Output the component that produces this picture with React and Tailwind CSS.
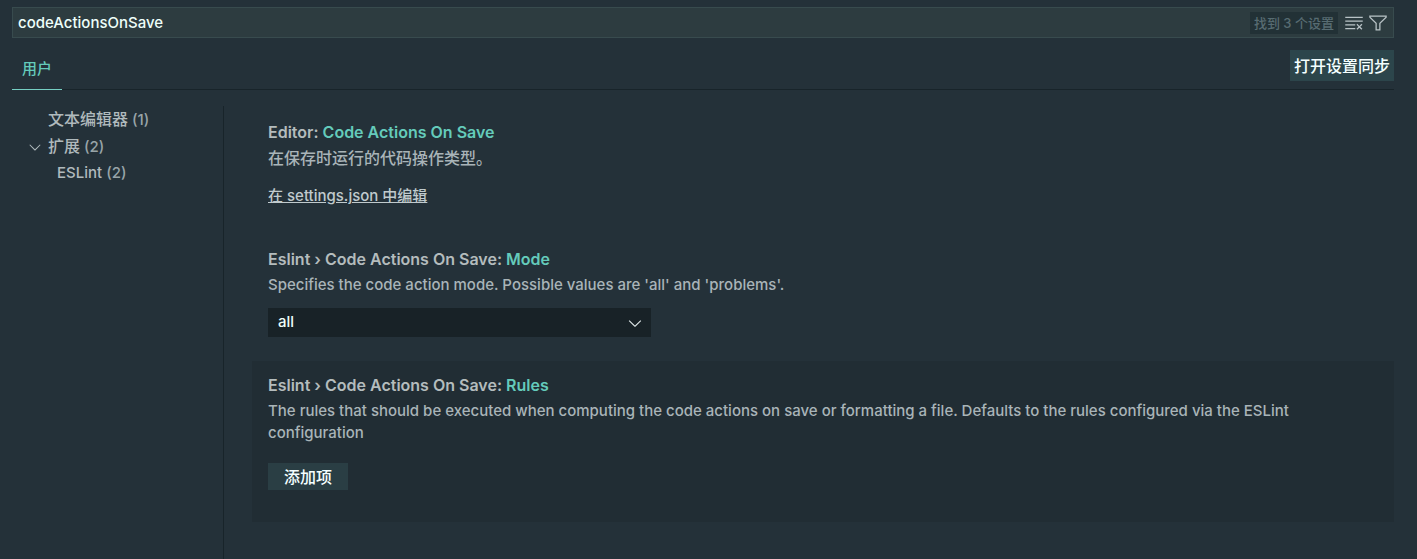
import { VscClearAll, VscFilter, VscChevronDown } from "react-icons/vsc";

function SearchBar() {
  return (
    <div className="flex h-[31px] items-center gap-1 border border-[#384b4e] bg-[#2d3c40] pr-[5px]">
      <input
        type="text"
        aria-label="搜索设置"
        defaultValue="codeActionsOnSave"
        className="h-full min-w-0 flex-1 bg-transparent px-[5px] text-[15px] text-[#eefffa] outline-none"
      />
      <span className="bg-[#223136] px-1 text-[13px] leading-[22px] text-[#586c72]">找到 3 个设置</span>
      <button type="button" aria-label="清除设置搜索输入" className="ml-0.5 text-[#b9c3c6]">
        <VscClearAll className="size-5" />
      </button>
      <button type="button" aria-label="筛选设置" className="text-[#b9c3c6]">
        <VscFilter className="size-5" />
      </button>
    </div>
  );
}

function Setting({ category, name, description, active, children }) {
  return (
    <section className={active ? "bg-[#212d34] px-4 pt-3 pb-8" : "px-4 pt-3 pb-6"}>
      <h2 className="text-[16px] leading-6 font-semibold text-[#b4bcbd]">
        {category}: <span className="text-[#64cbbb]">{name}</span>
      </h2>
      <p className="mt-[3px] pr-12 text-[15px] leading-[22px] text-[#a9b4b8]">{description}</p>
      {children}
    </section>
  );
}

export default function App() {
  return (
    <div className="flex min-h-screen flex-col bg-[#243139] pt-[7px] pr-[23px] pl-3 font-['Inter','Noto_Sans_CJK_SC',sans-serif] text-[15px] font-medium text-[#b0babd]">
      <SearchBar />
      <div className="flex items-end justify-between border-b border-[#18242a] pt-3">
        <button
          type="button"
          className="-mb-px h-10 border-b border-b-[#76cfc3] px-[10px] text-[15px] text-[#64cbbb]"
        >
          用户
        </button>
        <button
          type="button"
          className="mb-2 h-[31px] bg-[#2c454b] px-1 text-[16px] text-[#f4ffff]"
        >
          打开设置同步
        </button>
      </div>
      <div className="flex flex-1 pt-4">
        <nav aria-label="设置目录" className="w-[212px] shrink-0 border-r border-[#18242a]">
          <ul className="text-[15px] leading-[26px]">
            <li className="pl-9">
              <span className="text-[16px]">文本编辑器</span> <span className="text-[#98a4a8]">(1)</span>
            </li>
            <li>
              <div className="flex items-center">
                <VscChevronDown className="mr-1 ml-[14px] size-[18px]" />
                <span>
                  <span className="text-[16px]">扩展</span> <span className="text-[#98a4a8]">(2)</span>
                </span>
              </div>
              <ul>
                <li className="pl-[45px]">
                  ESLint <span className="text-[#98a4a8]">(2)</span>
                </li>
              </ul>
            </li>
          </ul>
        </nav>
        <main className="min-w-0 flex-1 pt-0.5 pl-7">
          <Setting
            category="Editor"
            name="Code Actions On Save"
            description={<span className="text-[16px]">在保存时运行的代码操作类型。</span>}
          >
            <a href="#settings-json" className="mt-[15px] mb-1 inline-block leading-[22px] text-[#c0cacd] underline">
              在 settings.json 中编辑
            </a>
          </Setting>
          <Setting
            category="Eslint › Code Actions On Save"
            name="Mode"
            description="Specifies the code action mode. Possible values are 'all' and 'problems'."
          >
            <div className="relative mt-3 w-[383px] max-w-full">
              <select
                aria-label="Code Actions On Save: Mode"
                className="block h-[29px] w-full appearance-none bg-[#182227] px-[10px] text-[15px] text-[#eefffa]"
              >
                <option>all</option>
                <option>problems</option>
              </select>
              <VscChevronDown className="pointer-events-none absolute top-[5px] right-[6px] size-5 text-[#dfe7e8]" />
            </div>
          </Setting>
          <Setting
            active
            category="Eslint › Code Actions On Save"
            name="Rules"
            description="The rules that should be executed when computing the code actions on save or formatting a file. Defaults to the rules configured via the ESLint configuration"
          >
            <button type="button" className="mt-[19px] block h-[27px] bg-[#2a3e44] px-4 text-[16px] text-[#f4ffff]">
              添加项
            </button>
          </Setting>
        </main>
      </div>
    </div>
  );
}
